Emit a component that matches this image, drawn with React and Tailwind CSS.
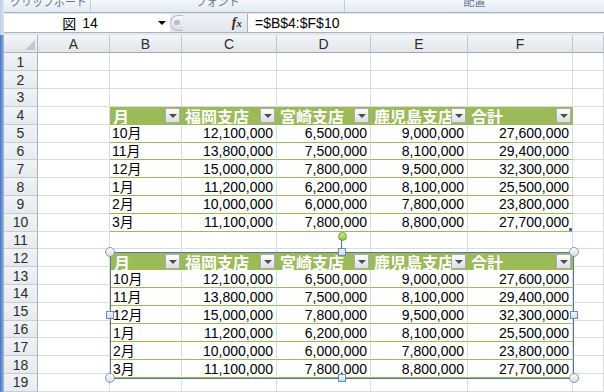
import React from 'react';

const GRID = 'grid grid-cols-[34px_72px_72px_95px_94px_97px_105px_31px]';
const PGRID = 'grid grid-cols-[71px_95px_94px_97px_105px]';
const FONT = "font-['Liberation_Sans','Noto_Sans_CJK_JP',sans-serif]";
const CJK = "font-['Noto_Sans_CJK_JP',sans-serif]";

const headers = ['月', '福岡支店', '宮崎支店', '鹿児島支店', '合計'];
const data = [
  ['10月', '12,100,000', '6,500,000', '9,000,000', '27,600,000'],
  ['11月', '13,800,000', '7,500,000', '8,100,000', '29,400,000'],
  ['12月', '15,000,000', '7,800,000', '9,500,000', '32,300,000'],
  ['1月', '11,200,000', '6,200,000', '8,100,000', '25,500,000'],
  ['2月', '10,000,000', '6,000,000', '7,800,000', '23,800,000'],
  ['3月', '11,100,000', '7,800,000', '8,800,000', '27,700,000'],
];
const letters = ['A', 'B', 'C', 'D', 'E', 'F', ''];

function Drop() {
  return (
    <div className="w-[15px] h-[15px] shrink-0 border border-[#a9acb0] bg-linear-to-b from-[#fdfdfd] to-[#dcdee1] flex items-center justify-center">
      <div className="w-0 h-0 border-l-[4px] border-r-[4px] border-t-[4px] border-l-transparent border-r-transparent border-t-[#4d4d4d]" />
    </div>
  );
}

function HeaderCell({ label }) {
  return (
    <div className="h-full flex items-center pl-[3px] pr-[1px] bg-[#9bbb59] border-r border-[#9bbb59] overflow-hidden">
      <span className={`flex-1 min-w-0 overflow-hidden whitespace-nowrap text-white font-bold text-[16px] leading-none ${CJK}`}>
        {label}
      </span>
      <Drop />
    </div>
  );
}

function DataCell({ value, first, marker }) {
  return (
    <div
      className={`relative h-full flex items-center border-r border-b border-r-[#dadcdd] border-b-[#9bbb59] text-[14px] leading-none text-black whitespace-nowrap ${
        first ? 'justify-start pl-[2px]' : 'justify-end pr-[3px]'
      }`}
    >
      {value}
      {marker && <div className="absolute right-[0px] bottom-[0px] w-[3px] h-[3px] bg-[#3d6db3]" />}
    </div>
  );
}

function SheetRow({ n }) {
  const cells = [];
  for (let c = 0; c < 7; c++) {
    if (n === 4 && c >= 1 && c <= 5) {
      cells.push(<HeaderCell key={c} label={headers[c - 1]} />);
    } else if (n >= 5 && n <= 10 && c >= 1 && c <= 5) {
      cells.push(
        <DataCell key={c} value={data[n - 5][c - 1]} first={c === 1} marker={n === 10 && c === 5} />
      );
    } else {
      cells.push(<div key={c} className="h-full border-r border-b border-[#dadcdd]" />);
    }
  }
  return (
    <div className={`${GRID} h-[18px]`}>
      <div className="h-full flex items-center justify-center bg-linear-to-b from-[#f1f3f6] to-[#e6e9ee] border-r border-r-[#a9b1bc] border-b border-b-[#c6ccd4] text-[14px] leading-none text-[#2d2d2d]">
        {n}
      </div>
      {cells}
    </div>
  );
}

function Picture() {
  return (
    <div className="absolute left-[110px] top-[252px] w-[464px] h-[127px] border border-[#5b7393] bg-white flex flex-col">
      <div className={`${PGRID} h-[17px]`}>
        {headers.map((h, i) => (
          <HeaderCell key={i} label={h} />
        ))}
      </div>
      {data.map((r, ri) => (
        <div key={ri} className={`${PGRID} h-[18px]`}>
          {r.map((v, ci) => (
            <DataCell key={ci} value={v} first={ci === 0} />
          ))}
        </div>
      ))}
    </div>
  );
}

function Circle({ x, y }) {
  return (
    <div
      className="absolute w-[10px] h-[10px] rounded-full border border-[#8797ab] bg-linear-to-b from-[#ffffff] to-[#d3dbe5]"
      style={{ left: x - 5, top: y - 5 }}
    />
  );
}

function Square({ x, y }) {
  return (
    <div
      className="absolute w-[8px] h-[8px] border border-[#6a8cb5] bg-linear-to-b from-[#eef5fc] to-[#c9dcf0]"
      style={{ left: x - 4, top: y - 4 }}
    />
  );
}

export default function App() {
  const rows = [];
  for (let i = 1; i <= 19; i++) rows.push(<SheetRow key={i} n={i} />);
  return (
    <div className={`relative w-[604px] h-[392px] overflow-hidden bg-white flex ${FONT}`}>
      {/* left strip */}
      <div className="w-[4px] h-full flex flex-col shrink-0">
        <div className="h-[35px] bg-linear-to-r from-[#bccde4] to-[#dbe5f2]" />
        <div className="flex-1 bg-linear-to-r from-[#4a78bd] via-[#6b93cf] to-[#a9c1e3]" />
      </div>

      <div className="flex-1 flex flex-col min-w-0">
        {/* ribbon bottom */}
        <div className="h-[12px] flex bg-linear-to-b from-[#f4f7fb] to-[#e3eaf3] text-[11px] text-[#5d7391]">
          <div className="w-[87px] h-full overflow-hidden flex items-start border-r border-[#c3cddb] pl-[6px] gap-[10px]">
            <span className={`-mt-[6px] leading-[14px] whitespace-nowrap ${CJK}`}>クリップボード</span>
            <div className="mt-[1px] w-[6px] h-[5px] border-r border-b border-[#a3b2c6]" />
          </div>
          <div className="w-[254px] h-full overflow-hidden flex items-start justify-center border-r border-[#c3cddb] relative">
            <span className={`-mt-[6px] leading-[14px] whitespace-nowrap ${CJK}`}>フォント</span>
          </div>
          <div className="flex-1 h-full overflow-hidden flex items-start justify-center">
            <span className={`-mt-[6px] leading-[14px] whitespace-nowrap ${CJK}`}>配置</span>
          </div>
        </div>
        <div className="h-[1px] bg-[#a9b4c2]" />
        <div className="h-[1px] bg-[#dfe5ec]" />

        {/* formula bar */}
        <div className="h-[18px] flex bg-linear-to-b from-[#eef1f5] to-[#e2e7ed]">
          <div className="w-[166px] h-full bg-white flex items-center">
            <div className="flex-1 flex items-center justify-center text-[14px] leading-none text-black pl-[2px]">
              <span className={CJK}>図</span>
              <span className="ml-[6px]">14</span>
            </div>
            <div className="w-[16px] flex items-center justify-center">
              <div className="w-0 h-0 border-l-[4px] border-r-[4px] border-t-[4px] border-l-transparent border-r-transparent border-t-black" />
            </div>
          </div>
          <div className="w-[14px] h-full flex items-center">
            <div className="w-[13px] h-[16px] rounded-l-full border border-r-0 border-[#b4bcc7] bg-linear-to-b from-[#f7f8fa] to-[#d8dde3] flex items-center justify-center">
              <div className="w-[6px] h-[5px] rounded-full bg-[#b9bfc7]" />
            </div>
          </div>
          <div className="w-[63px] h-full flex items-center justify-end pr-[5px]">
            <span className="font-['Liberation_Serif',serif] italic font-bold text-[14px] leading-none text-[#2e2e2e]">
              f<span className="text-[11px]">x</span>
            </span>
          </div>
          <div className="w-[1px] bg-[#a9b3bf]" />
          <div className="flex-1 h-full bg-white flex items-center pl-[7px] text-[14px] leading-none text-black">
            =$B$4:$F$10
          </div>
        </div>
        <div className="h-[1px] bg-[#a9b3bf]" />
        <div className="h-[2px] bg-[#e4e8ed]" />

        {/* column header */}
        <div className={`${GRID} h-[19px]`}>
          <div className="h-full bg-linear-to-b from-[#f3f5f8] to-[#e2e6eb] border-r border-b border-[#a9b1bc] flex items-end justify-end p-[2px]">
            <div className="w-0 h-0 border-l-[10px] border-l-transparent border-b-[10px] border-b-[#c2c8d0]" />
          </div>
          {letters.map((l, i) => (
            <div
              key={i}
              className="h-full flex items-center justify-center bg-linear-to-b from-[#f3f5f8] to-[#e2e6eb] border-r border-r-[#c3c9d1] border-b border-b-[#9ea9b6] text-[14px] leading-none text-[#2d2d2d]"
            >
              {l}
            </div>
          ))}
        </div>

        {rows}
      </div>

      {/* picture object */}
      <Picture />
      {/* rotation handle */}
      <div className="absolute left-[341px] top-[240px] w-[1px] h-[9px] bg-[#5b7393]" />
      <div className="absolute left-[338px] top-[232px] w-[9px] h-[9px] rounded-full border border-[#6d9a2c] bg-linear-to-b from-[#c9f08a] to-[#8cc63f]" />
      <Circle x={110} y={252} />
      <Circle x={574} y={252} />
      <Circle x={110} y={378} />
      <Circle x={574} y={378} />
      <Square x={342} y={252} />
      <Square x={110} y={315} />
      <Square x={574} y={315} />
      <Square x={342} y={378} />
    </div>
  );
}
